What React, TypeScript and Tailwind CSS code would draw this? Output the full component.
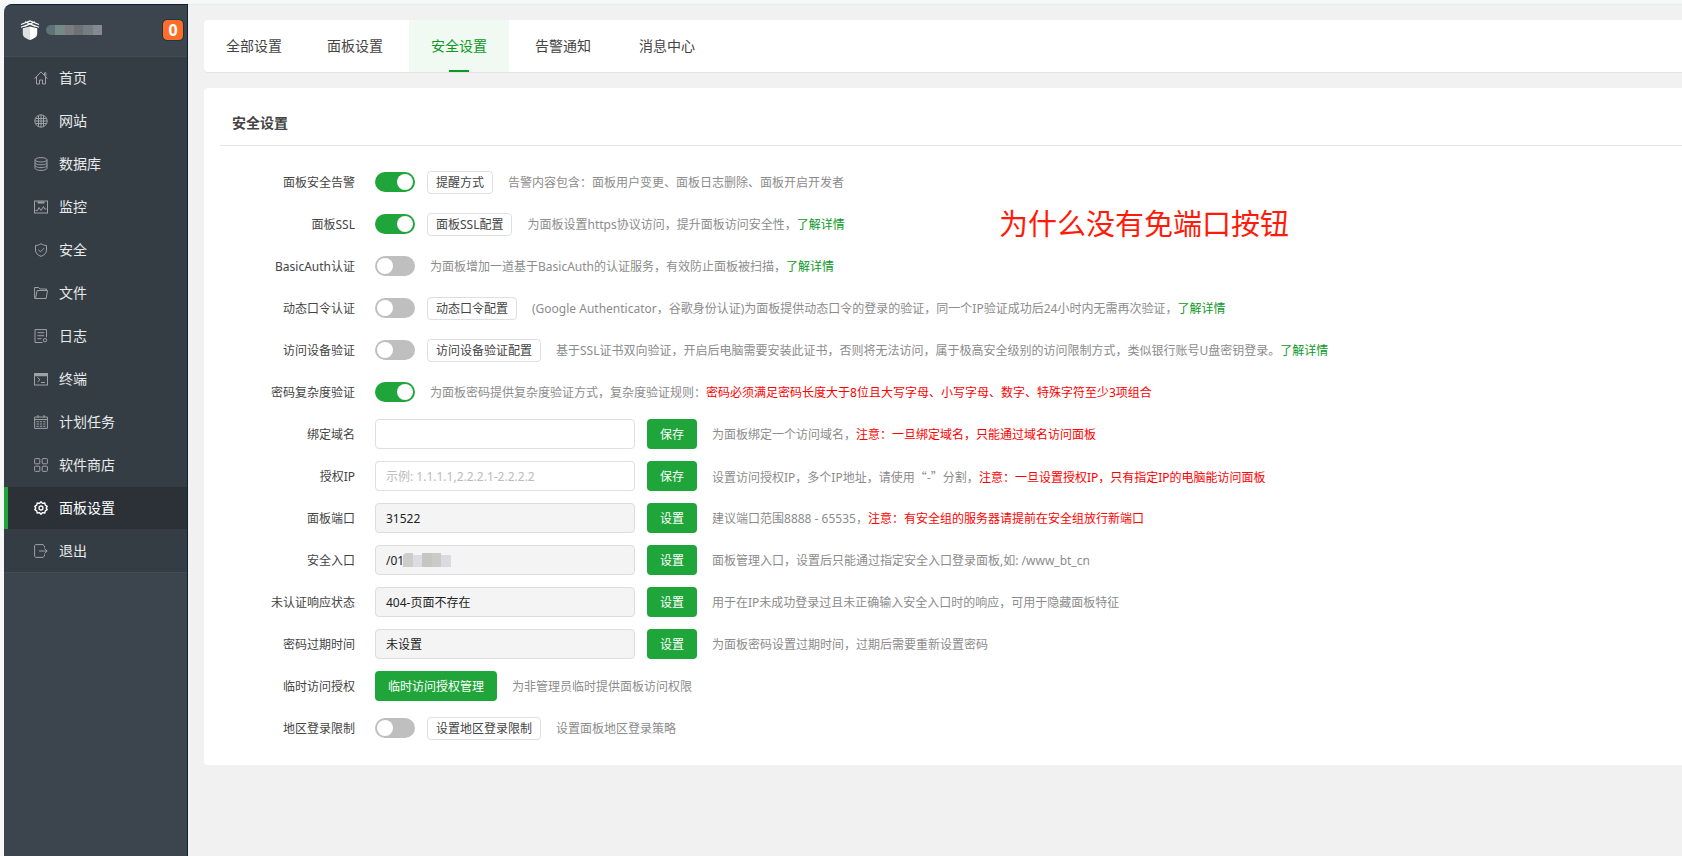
import { useState } from "react";
import type { ReactNode } from "react";

type IconProps = { children: ReactNode };

const Icon = ({ children }: IconProps) => (
  <svg
    viewBox="0 0 14 14"
    className="size-3.5 shrink-0"
    fill="none"
    stroke="currentColor"
    strokeWidth="1"
    aria-hidden="true"
  >
    {children}
  </svg>
);

const menu: { name: string; icon: ReactNode; active?: boolean }[] = [
  {
    name: "首页",
    icon: <path d="M.6 7.6 7 .9l6.4 6.7M2.5 6v7h3V9h3v4h3V6M10.5 4.2V1.8h1.4v3.8" />,
  },
  {
    name: "网站",
    icon: (
      <>
        <circle cx="7" cy="7" r="6.2" />
        <path d="M4.5 1.5v11M9.5 1.5v11M7 .8v12.4M.8 7h12.4M1.5 4.5h11M1.5 9.5h11" />
      </>
    ),
  },
  {
    name: "数据库",
    icon: (
      <>
        <ellipse cx="7" cy="2.8" rx="6" ry="2.2" />
        <path d="M1 2.8v8.4c0 1.2 2.7 2.2 6 2.2s6-1 6-2.2V2.8M1 5.6c0 1.2 2.7 2.2 6 2.2s6-1 6-2.2M1 8.4c0 1.2 2.7 2.2 6 2.2s6-1 6-2.2" />
      </>
    ),
  },
  {
    name: "监控",
    icon: (
      <>
        <rect x=".5" y="1" width="13" height="12" />
        <path d="M3.5 2.5h7" strokeWidth="2" />
        <path d="M1.5 10.5h2l1.5-3 2 3 2.5-4 1 2.5h2" />
      </>
    ),
  },
  {
    name: "安全",
    icon: (
      <>
        <path d="M7 .7c1.8 1.2 3.5 1.7 5.5 1.8V7c0 3-2 5-5.5 6.4C3.5 12 1.5 10 1.5 7V2.5C3.5 2.4 5.2 1.9 7 .7Z" />
        <path d="m4.3 6.8 2.2 2L10 5.2" />
      </>
    ),
  },
  {
    name: "文件",
    icon: (
      <>
        <path d="M1.5 12.5h10.7l1.3-8H3.2L1.5 12.5Z" />
        <path d="M1.5 12.5H.6v-11h4L6 3h6.5v1.5" />
      </>
    ),
  },
  {
    name: "日志",
    icon: (
      <>
        <path d="M8.5 13.5H1V.6h11.5v7.6M3.5 3.7h6.7M3.5 6.7h6.7M3.5 9.7h4" />
        <circle cx="11" cy="11.2" r="1.7" />
      </>
    ),
  },
  {
    name: "终端",
    icon: (
      <>
        <rect x=".5" y="1.5" width="13" height="11.5" />
        <path d="M.5 3h13" strokeWidth="2.5" />
        <path d="M3.5 5.5 6 7.7 3.5 9.900M7 10.500h4" />
      </>
    ),
  },
  {
    name: "计划任务",
    icon: (
      <>
        <path d="M.6 2h12.8v11.4H.6ZM.6 4.5h12.8M4 0v3M10 0v3" />
        <path d="M2.5 6.7h9M2.5 9h9M2.5 11.3h9" strokeDasharray="2.3 1" />
      </>
    ),
  },
  {
    name: "软件商店",
    icon: (
      <>
        <rect x=".6" y=".6" width="5.2" height="5.2" rx=".8" />
        <rect x="8.2" y=".6" width="5.2" height="5.2" rx=".8" />
        <rect x=".6" y="8.2" width="5.2" height="5.2" rx=".8" />
        <rect x="8.2" y="8.2" width="5.2" height="5.2" rx=".8" />
      </>
    ),
  },
  {
    name: "面板设置",
    active: true,
    icon: (
      <>
        <circle cx="7" cy="7" r="2" strokeWidth="1.3" />
        <path
          d="m7 .8 1.6 1.6 2.2-.4.5 2.2 1.9 1.2L12.2 7l1 1.7-1.9 1.1-.5 2.2-2.2-.4L7 13.2l-1.6-1.6-2.2.4-.5-2.2L.8 8.7 1.8 7l-1-1.6 1.900-1.200.5-2.200 2.200.4L7 .8Z"
          strokeWidth="1.4"
          strokeLinejoin="round"
        />
      </>
    ),
  },
  {
    name: "退出",
    icon: <path d="M10.5 3.5V2L9 .6H1.5L.6 1.5v11l.9.9H9l1.5-1.4v-1.5M5 7h8M10.5 4.500 13.200 7l-2.700 2.500" />,
  },
];

const tabs = ["全部设置", "面板设置", "安全设置", "告警通知", "消息中心"];

type Row = {
  label: string;
  on?: boolean;
  value?: string;
  placeholder?: string;
  readOnly?: boolean;
  masked?: boolean;
  config?: string;
  action?: string;
  hint: ReactNode;
  link?: boolean;
  warn?: string;
};

const rows: Row[] = [
  {
    label: "面板安全告警",
    on: true,
    config: "提醒方式",
    hint: "告警内容包含：面板用户变更、面板日志删除、面板开启开发者",
  },
  {
    label: "面板SSL",
    on: true,
    config: "面板SSL配置",
    hint: "为面板设置https协议访问，提升面板访问安全性，",
    link: true,
  },
  {
    label: "BasicAuth认证",
    on: false,
    hint: "为面板增加一道基于BasicAuth的认证服务，有效防止面板被扫描，",
    link: true,
  },
  {
    label: "动态口令认证",
    on: false,
    config: "动态口令配置",
    hint: "(Google Authenticator，谷歌身份认证)为面板提供动态口令的登录的验证，同一个IP验证成功后24小时内无需再次验证，",
    link: true,
  },
  {
    label: "访问设备验证",
    on: false,
    config: "访问设备验证配置",
    hint: "基于SSL证书双向验证，开启后电脑需要安装此证书，否则将无法访问，属于极高安全级别的访问限制方式，类似银行账号U盘密钥登录。",
    link: true,
  },
  {
    label: "密码复杂度验证",
    on: true,
    hint: "为面板密码提供复杂度验证方式，复杂度验证规则：",
    warn: "密码必须满足密码长度大于8位且大写字母、小写字母、数字、特殊字符至少3项组合",
  },
  {
    label: "绑定域名",
    value: "",
    action: "保存",
    hint: "为面板绑定一个访问域名，",
    warn: "注意：一旦绑定域名，只能通过域名访问面板",
  },
  {
    label: "授权IP",
    value: "",
    placeholder: "示例: 1.1.1.1,2.2.2.1-2.2.2.2",
    action: "保存",
    hint: (
      <>
        设置访问授权IP，多个IP地址，请使用
        <span className="font-['Noto_Sans_CJK_SC',sans-serif]">“-”</span>
        分割，
      </>
    ),
    warn: "注意：一旦设置授权IP，只有指定IP的电脑能访问面板",
  },
  {
    label: "面板端口",
    value: "31522",
    readOnly: true,
    action: "设置",
    hint: "建议端口范围8888 - 65535，",
    warn: "注意：有安全组的服务器请提前在安全组放行新端口",
  },
  {
    label: "安全入口",
    value: "/01",
    readOnly: true,
    masked: true,
    action: "设置",
    hint: "面板管理入口，设置后只能通过指定安全入口登录面板,如: /www_bt_cn",
  },
  {
    label: "未认证响应状态",
    value: "404-页面不存在",
    readOnly: true,
    action: "设置",
    hint: "用于在IP未成功登录过且未正确输入安全入口时的响应，可用于隐藏面板特征",
  },
  {
    label: "密码过期时间",
    value: "未设置",
    readOnly: true,
    action: "设置",
    hint: "为面板密码设置过期时间，过期后需要重新设置密码",
  },
  {
    label: "临时访问授权",
    action: "临时访问授权管理",
    hint: "为非管理员临时提供面板访问权限",
  },
  {
    label: "地区登录限制",
    on: false,
    config: "设置地区登录限制",
    hint: "设置面板地区登录策略",
  },
];

const Toggle = ({ id, initial }: { id: string; initial: boolean }) => {
  const [enabled, setEnabled] = useState(initial);

  return (
    <span className="relative mr-3 inline-flex h-5 w-10 shrink-0">
      <input
        id={id}
        type="checkbox"
        role="switch"
        checked={enabled}
        onChange={(e) => setEnabled(e.target.checked)}
        className="peer h-5 w-10 cursor-pointer appearance-none rounded-full bg-[#bfbfbf] checked:bg-[#20a53a]"
      />
      <span
        aria-hidden="true"
        className="pointer-events-none absolute top-0.5 left-0.5 size-4 rounded-full bg-white peer-checked:translate-x-5"
      />
    </span>
  );
};

const Logo = () => (
  <svg viewBox="0 0 20 20" className="size-5" fill="none" aria-hidden="true">
    <path
      d="M1 4.5 10 1l9 3.5M1 7.2 10 4l9 3.2M5 1.8l10 4.4M15 1.8 5 6.2"
      stroke="#fff"
      strokeWidth="1.2"
    />
    <path d="M2.8 8.3 10 6.5V20c-4.5-1.5-7.2-3.2-7.2-6.2V8.3Z" fill="#e0e0e0" />
    <path d="M17.2 8.3 10 6.5V20c4.5-1.5 7.2-3.2 7.2-6.2V8.3Z" fill="#fff" />
  </svg>
);

const Sidebar = () => (
  <aside className="flex w-46 shrink-0 flex-col overflow-hidden rounded-tl-lg border-t border-r border-[#0c2430] bg-[#3c444d]">
    <div className="flex h-[51px] items-center pr-1 pb-0.5 pl-4">
      <Logo />
      <span className="ml-1.5 flex h-2.5 w-14 overflow-hidden rounded-l-full" aria-hidden="true">
        <span className="flex-1 bg-[#5c7378]" />
        <span className="flex-1 bg-[#778a86]" />
        <span className="flex-1 bg-[#7c7b80]" />
        <span className="flex-1 bg-[#6b7177]" />
        <span className="flex-1 bg-[#748080]" />
        <span className="flex-1 bg-[#868896]" />
      </span>
      <span className="ml-auto flex h-5 w-5 items-center justify-center rounded bg-[#ff6d26] text-base leading-5 font-bold text-white outline outline-[#17394a]">
        0
      </span>
    </div>
    <nav className="flex flex-col gap-px border-y border-[#414b53] bg-[#353d44]">
      {menu.map((item) => (
        <a
          key={item.name}
          href="#"
          className={
            item.active
              ? "flex h-[42px] items-center gap-[11px] border-l-4 border-[#20a53a] bg-[#2c3138] pl-[26px] text-sm text-white"
              : "flex h-[42px] items-center gap-[11px] border-l-4 border-transparent pl-[26px] text-sm text-[#9da2a5]"
          }
        >
          <Icon>{item.icon}</Icon>
          <span className={item.active ? "text-white" : "text-[#e8eaeb]"}>{item.name}</span>
        </a>
      ))}
    </nav>
  </aside>
);

const SettingRow = ({ row, id }: { row: Row; id: string }) => (
  <div className="flex h-[42px] items-center">
    <label htmlFor={id} className="mr-5 w-[135px] shrink-0 pt-0.5 text-right text-[#444]">
      {row.label}
    </label>
    {row.on !== undefined && <Toggle id={id} initial={row.on} />}
    {row.config && (
      <button
        type="button"
        className="mr-3 h-[23px] shrink-0 rounded border border-[#dcdfe6] bg-white px-2 pt-0.5 text-[#444]"
      >
        {row.config}
      </button>
    )}
    {row.value !== undefined && (
      <span className="relative mr-3 w-[260px] shrink-0">
        <input
          id={id}
          type="text"
          defaultValue={row.value}
          placeholder={row.placeholder}
          readOnly={row.readOnly}
          className="block h-[30px] w-full rounded border border-[#dcdfe6] bg-white px-2.5 text-[#222] placeholder:text-[#bbb] read-only:border-[#ddd] read-only:bg-[#f4f4f4]"
        />
        {row.masked && (
          <span className="absolute top-2 left-7 flex h-3.5 w-12 items-end" aria-hidden="true">
            <span className="h-3.5 flex-1 rounded-tl bg-[#cdcdce]" />
            <span className="h-3 flex-1 bg-[#dcdce2]" />
            <span className="h-3.5 flex-1 bg-[#c6c6c1]" />
            <span className="h-3.5 flex-1 bg-[#cacac8]" />
            <span className="h-3 flex-1 bg-[#dadae1]" />
          </span>
        )}
      </span>
    )}
    {row.action && (
      <button
        type="button"
        id={row.value === undefined ? id : undefined}
        className="mr-3 h-[30px] shrink-0 rounded bg-[#20a53a] px-[13px] pt-px text-white"
      >
        {row.action}
      </button>
    )}
    <p className="ml-[3px] pt-0.5 whitespace-nowrap text-[#8c8c8c]">
      {row.hint}
      {row.link && (
        <a href="#" className="text-[#0b991f]">
          了解详情
        </a>
      )}
      {row.warn && <span className="text-[#f00]">{row.warn}</span>}
    </p>
  </div>
);

const App = () => {
  return (
    <div className="flex min-h-screen overflow-hidden bg-[#f6f8f8] pt-1 pl-1 font-['Noto_Sans','Noto_Sans_CJK_SC',sans-serif] text-xs">
      <Sidebar />
      <main className="min-w-0 flex-1 border-t border-[#ebebeb] bg-[#f1f1f1] pt-[15px] pl-4">
        <div className="flex h-[52px] overflow-hidden rounded-l bg-white shadow-2xs" role="tablist">
          {tabs.map((tab) => (
            <button
              key={tab}
              type="button"
              role="tab"
              aria-selected={tab === "安全设置"}
              className={
                tab === "安全设置"
                  ? "relative mr-1 w-[100px] bg-[#f0f9f2] text-sm text-[#0b991f] after:absolute after:bottom-0 after:left-10 after:h-0.5 after:w-5 after:bg-[#0b991f]"
                  : "mr-1 w-[100px] text-sm text-[#444] first:mr-px"
              }
            >
              {tab}
            </button>
          ))}
        </div>
        <section className="relative mt-4 rounded-l bg-white pb-4 pl-4">
          <h2 className="flex h-[58px] items-end border-b border-[#e6e6e6] pb-3 pl-3 text-sm font-bold text-[#444]">
            安全设置
          </h2>
          <div className="pt-[15px]">
            {rows.map((row, i) => (
              <SettingRow key={row.label} row={row} id={`setting-${i}`} />
            ))}
          </div>
          <p className="absolute top-[114px] left-[795px] text-[29px] leading-[44px] whitespace-nowrap text-[#ff1a0a]">
            为什么没有免端口按钮
          </p>
        </section>
      </main>
    </div>
  );
};

export default App;
